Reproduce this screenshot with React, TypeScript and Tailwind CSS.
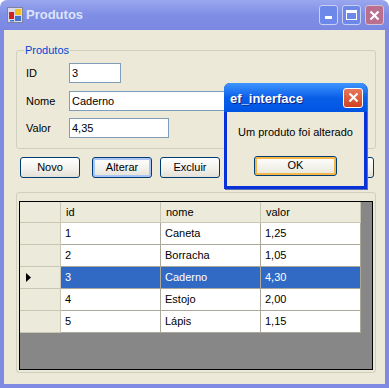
import React from "react";

const rows = [
  { id: "1", nome: "Caneta", valor: "1,25" },
  { id: "2", nome: "Borracha", valor: "1,05" },
  { id: "3", nome: "Caderno", valor: "4,30", sel: true },
  { id: "4", nome: "Estojo", valor: "2,00" },
  { id: "5", nome: "Lápis", valor: "1,15" },
];

function AppIcon() {
  return (
    <svg width="16" height="16" viewBox="0 0 16 16">
      <rect x="0.5" y="0.5" width="15" height="15" fill="#d8d8e8" stroke="#8080a0" />
      <rect x="2" y="5" width="5" height="7" fill="#d02020" />
      <rect x="8" y="2" width="6" height="6" fill="#f0c020" />
      <rect x="8" y="9" width="6" height="5" fill="#4070d0" />
      <rect x="3" y="13" width="4" height="1.5" fill="#4070d0" />
    </svg>
  );
}

function XpButton({ label, focused, className = "" }: { label: string; focused?: boolean; className?: string }) {
  return (
    <button
      className={
        "h-[21px] w-[60px] rounded-[3px] border border-[#003c74] bg-gradient-to-b from-white via-[#f4f3ee] to-[#e3e1d6] text-[11px] text-black " +
        (focused ? "shadow-[inset_0_0_0_2px_#a9c4f5] " : "") +
        className
      }
    >
      {label}
    </button>
  );
}

export default function App() {
  return (
    <div className="w-[389px] h-[388px] flex flex-col font-['Liberation_Sans',Arial,sans-serif] text-[11px] select-none">
      {/* title bar (inactive) */}
      <div className="h-[30px] flex items-center rounded-t-[7px] bg-gradient-to-b from-[#9aa6ee] via-[#7f8ee5] to-[#7b88e2] pl-[7px] pr-[5px]">
        <AppIcon />
        <span className="ml-[3px] text-[13px] font-bold text-[#dde4fa]">Produtos</span>
        <div className="ml-auto flex gap-[4px]">
          <div className="w-[19px] h-[20px] rounded-[3px] border border-[#c8d0f4] bg-[#6c88e8] flex items-end justify-center pb-[5px]">
            <div className="w-[7px] h-[3px] bg-white" />
          </div>
          <div className="w-[19px] h-[20px] rounded-[3px] border border-[#c8d0f4] bg-[#6c88e8] flex items-center justify-center">
            <div className="w-[11px] h-[10px] border border-white border-t-[3px]" />
          </div>
          <div className="w-[19px] h-[20px] rounded-[3px] border border-[#d8c0d4] bg-[#b8708e] flex items-center justify-center">
            <svg width="11" height="11" viewBox="0 0 11 11">
              <path d="M1.5 1.5 L9.5 9.5 M9.5 1.5 L1.5 9.5" stroke="white" strokeWidth="2.2" />
            </svg>
          </div>
        </div>
      </div>

      {/* body */}
      <div className="relative flex-1 border-x-4 border-b-4 border-[#7f8ae2] bg-[#ece9d8] pl-[12px]">
        <fieldset className="mt-[14px] w-[360px] rounded-[3px] border border-[#d0d0bf] pl-[9px] pt-[6px] pb-[10px]">
          <legend className="ml-[-2px] px-[1px] text-[#0046d5] leading-[13px]">Produtos</legend>
          <div className="flex items-center h-[20px] mb-[8px]">
            <span className="w-[43px] text-black">ID</span>
            <div className="w-[52px] h-[20px] bg-white border border-[#7f9db9] pl-[2px] leading-[18px]">3</div>
          </div>
          <div className="flex items-center h-[20px] mb-[7px]">
            <span className="w-[43px] text-black">Nome</span>
            <div className="w-[231px] h-[20px] bg-white border border-[#7f9db9] pl-[2px] leading-[18px]">Caderno</div>
          </div>
          <div className="flex items-center h-[20px]">
            <span className="w-[43px] text-black">Valor</span>
            <div className="w-[100px] h-[20px] bg-white border border-[#7f9db9] pl-[2px] leading-[18px]">4,35</div>
          </div>
        </fieldset>

        <div className="mt-[8px] ml-[4px] flex">
          <XpButton label="Novo" />
          <XpButton label="Alterar" focused className="ml-[12px]" />
          <XpButton label="Excluir" className="ml-[8px]" />
          <XpButton label="Salvar" className="ml-[94px]" />
        </div>

        <div className="mt-[14px] w-[360px] h-[181px] rounded-[3px] border border-[#d0d0bf] pt-[8px] px-[2px] pb-[2px]">
          <div className="h-full border border-black bg-[#878787]">
            <div className="flex h-[21px]">
              <div className="w-[41px] bg-[#ebeadb] border-r border-b border-[#c9c6b4]" />
              {["id", "nome", "valor"].map((h) => (
                <div key={h} className="w-[100px] bg-[#ebeadb] border-r border-b border-[#c9c6b4] flex items-center pl-[5px]">
                  {h}
                </div>
              ))}
            </div>
            {rows.map((r) => (
              <div key={r.id} className="flex h-[22px]">
                <div className="w-[41px] bg-[#ebeadb] border-r border-b border-[#c9c6b4] flex items-center pl-[6px]">
                  {r.sel && (
                    <svg width="5" height="9" viewBox="0 0 5 9">
                      <path d="M0 0 L5 4.5 L0 9 Z" fill="black" />
                    </svg>
                  )}
                </div>
                {[r.id, r.nome, r.valor].map((c, i) => (
                  <div
                    key={i}
                    className={
                      "w-[100px] border-r border-b border-[#aca899] flex items-center pl-[4px] " +
                      (r.sel ? "bg-[#316ac5] text-white" : "bg-white text-black")
                    }
                  >
                    {c}
                  </div>
                ))}
              </div>
            ))}
          </div>
        </div>

        {/* message box */}
        <div className="absolute left-[220px] top-[53px] w-[143px] h-[106px] flex flex-col rounded-t-[6px] bg-[#0831d9] shadow-[1px_1px_0_#5a6fb0]">
          <div className="h-[29px] flex items-center rounded-t-[6px] bg-gradient-to-b from-[#3d95ff] via-[#0a5fe8] to-[#0054e3] pl-[6px] pr-[4px]">
            <span className="mt-[3px] text-[13px] font-bold text-white [text-shadow:1px_1px_0_#0a1e80]">ef_interface</span>
            <div className="ml-auto w-[20px] h-[20px] rounded-[3px] border border-white bg-gradient-to-b from-[#e8785a] to-[#d04020] flex items-center justify-center">
              <svg width="11" height="11" viewBox="0 0 11 11">
                <path d="M1.5 1.5 L9.5 9.5 M9.5 1.5 L1.5 9.5" stroke="white" strokeWidth="2.2" />
              </svg>
            </div>
          </div>
          <div className="flex-1 mx-[3px] mb-[3px] bg-[#ece9d8] flex flex-col items-center">
            <span className="mt-[12px] text-black">Um produto foi alterado</span>
            <button className="mt-[15px] w-[83px] h-[20px] rounded-[3px] border border-[#003c74] bg-gradient-to-b from-white to-[#e8e6da] shadow-[inset_0_0_0_2px_#f5b745] text-black">
              OK
            </button>
          </div>
        </div>
      </div>
    </div>
  );
}
